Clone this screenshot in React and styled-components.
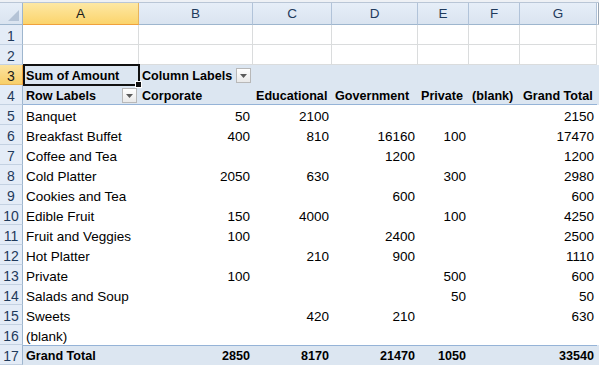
import React from 'react'
import styled, { createGlobalStyle, css } from 'styled-components'

const COLS = '23px 116px 114px 79px 86px 51px 51px 77px 1fr'

const GlobalStyle = createGlobalStyle`
  body {
    margin: 0;
    background: #fff;
    font-family: 'Liberation Sans', Arial, sans-serif;
  }
`

const Sheet = styled.div`
  width: 599px;
  height: 367px;
  overflow: hidden;
  background: #fff;
  font-size: 13.5px;
  color: #000;
`

const TopStrip = styled.div`
  height: 2px;
  background: #eef1f5;
`

const HeaderRow = styled.div`
  display: grid;
  grid-template-columns: ${COLS};
  height: 23px;
  box-sizing: border-box;
  border-top: 1px solid #b9c6d6;
`

const ColHead = styled.div`
  box-sizing: border-box;
  display: flex;
  align-items: center;
  justify-content: center;
  font-size: 13.5px;
  color: #1f3a5c;
  border-right: 1px solid #b1c3d9;
  border-bottom: 1px solid #9eb6ce;
  background: linear-gradient(#e6eef8, #dae4f0);
  ${p =>
    p.$selected &&
    css`
      background: linear-gradient(#fde8a4, #fbd46c);
      border-bottom-color: #f0a13c;
      border-right-color: #e8b45c;
      color: #1b1b1b;
    `}
  ${p =>
    p.$edge &&
    css`
      border-right: 1px solid #9aa6b4;
      background: #fff;
      border-bottom-color: #c8ced6;
    `}
`

const Corner = styled(ColHead)`
  justify-content: flex-end;
  align-items: flex-end;
  padding: 0 3px 3px 0;
  border-right-color: #9eb6ce;
`

const Row = styled.div`
  display: grid;
  grid-template-columns: ${COLS};
  height: 20px;
  background: ${p => (p.$pivot ? '#dce6f1' : '#fff')};
`

const RowHead = styled.div`
  box-sizing: border-box;
  text-align: center;
  padding-top: 3px;
  line-height: 16px;
  font-size: 14px;
  color: #1f3a5c;
  background: #e4ecf7;
  border-right: 1px solid #9eb6ce;
  border-bottom: 1px solid #c3d1e2;
  ${p =>
    p.$selected &&
    css`
      background: linear-gradient(#fbe3a0, #f8cf69);
      border-right-color: #f0a13c;
      border-bottom-color: #e8b45c;
      color: #1b1b1b;
    `}
`

const Cell = styled.div`
  position: relative;
  box-sizing: border-box;
  display: flex;
  align-items: flex-start;
  justify-content: ${p => (p.$num ? 'flex-end' : 'flex-start')};
  gap: 4px;
  padding: 4px ${p => (p.$num ? '3px' : '2px')} 0 3px;
  line-height: 15px;
  white-space: nowrap;
  font-weight: ${p => (p.$bold ? 'bold' : 'normal')};
  ${p => p.$bold && 'font-size: 12.6px;'}
  ${p =>
    p.$grid &&
    css`
      border-right: 1px solid #dadcdd;
      border-bottom: 1px solid #dadcdd;
    `}
  ${p => p.$lineBottom && 'border-bottom: 1px solid #95b3d7;'}
  ${p => p.$lineTop && 'border-top: 1px solid #95b3d7; padding-top: 3px;'}
`

const Label = styled.span`
  flex: 1;
`

const DropButton = styled.span`
  box-sizing: border-box;
  width: 15px;
  height: 15px;
  margin-top: -1px;
  display: flex;
  align-items: center;
  justify-content: center;
  border: 1px solid #b8b8b8;
  background: linear-gradient(#ffffff, #e9e9e9);
  flex: none;
`

const SelectionFrame = styled.span`
  position: absolute;
  top: -1px;
  left: 0;
  right: -1px;
  bottom: -1px;
  border: 2px solid #111;
  pointer-events: none;
`

const FillHandle = styled.span`
  position: absolute;
  right: -4px;
  bottom: -4px;
  width: 5px;
  height: 5px;
  background: #111;
  border: 1px solid #fff;
`

const Arrow = () => (
  <svg width="7" height="4" viewBox="0 0 7 4">
    <path d="M0 0h7L3.5 4z" fill="#5b5b5b" />
  </svg>
)

const Dropdown = () => (
  <DropButton>
    <Arrow />
  </DropButton>
)

const letters = ['A', 'B', 'C', 'D', 'E', 'F', 'G']

const rows = [
  ['Banquet', 50, 2100, '', '', '', 2150],
  ['Breakfast Buffet', 400, 810, 16160, 100, '', 17470],
  ['Coffee and Tea', '', '', 1200, '', '', 1200],
  ['Cold Platter', 2050, 630, '', 300, '', 2980],
  ['Cookies and Tea', '', '', 600, '', '', 600],
  ['Edible Fruit', 150, 4000, '', 100, '', 4250],
  ['Fruit and Veggies', 100, '', 2400, '', '', 2500],
  ['Hot Platter', '', 210, 900, '', '', 1110],
  ['Private', 100, '', '', 500, '', 600],
  ['Salads and Soup', '', '', '', 50, '', 50],
  ['Sweets', '', 420, 210, '', '', 630],
  ['(blank)', '', '', '', '', '', '']
]

const totals = ['Grand Total', 2850, 8170, 21470, 1050, '', 33540]
const heads = ['Corporate', 'Educational', 'Government', 'Private', '(blank)', 'Grand Total']

const App = () => (
  <Sheet>
    <GlobalStyle />
    <TopStrip />
    <HeaderRow>
      <Corner>
        <svg width="11" height="11" viewBox="0 0 11 11">
          <path d="M11 0v11H0z" fill="#b4c3d6" />
        </svg>
      </Corner>
      {letters.map(l => (
        <ColHead key={l} $selected={l === 'A'}>
          {l}
        </ColHead>
      ))}
      <ColHead $edge />
    </HeaderRow>

    {[1, 2].map(n => (
      <Row key={n}>
        <RowHead>{n}</RowHead>
        {letters.map(l => (
          <Cell key={l} $grid />
        ))}
        <Cell />
      </Row>
    ))}

    <Row $pivot>
      <RowHead $selected>3</RowHead>
      <Cell $bold>
        Sum of Amount
        <SelectionFrame>
          <FillHandle />
        </SelectionFrame>
      </Cell>
      <Cell $bold>
        Column Labels
        <Dropdown />
      </Cell>
      <Cell />
      <Cell />
      <Cell />
      <Cell />
      <Cell />
      <Cell />
    </Row>

    <Row $pivot>
      <RowHead>4</RowHead>
      <Cell $bold $lineBottom>
        <Label>Row Labels</Label>
        <Dropdown />
      </Cell>
      {heads.map(h => (
        <Cell key={h} $bold $lineBottom>
          {h}
        </Cell>
      ))}
      <Cell />
    </Row>

    {rows.map(([label, ...vals], i) => (
      <Row key={label}>
        <RowHead>{i + 5}</RowHead>
        <Cell>{label}</Cell>
        {vals.map((v, j) => (
          <Cell key={j} $num>
            {v}
          </Cell>
        ))}
        <Cell />
      </Row>
    ))}

    <Row $pivot>
      <RowHead>17</RowHead>
      <Cell $bold $lineTop>
        {totals[0]}
      </Cell>
      {totals.slice(1).map((v, j) => (
        <Cell key={j} $bold $num $lineTop>
          {v}
        </Cell>
      ))}
      <Cell />
    </Row>
  </Sheet>
)

export default App
